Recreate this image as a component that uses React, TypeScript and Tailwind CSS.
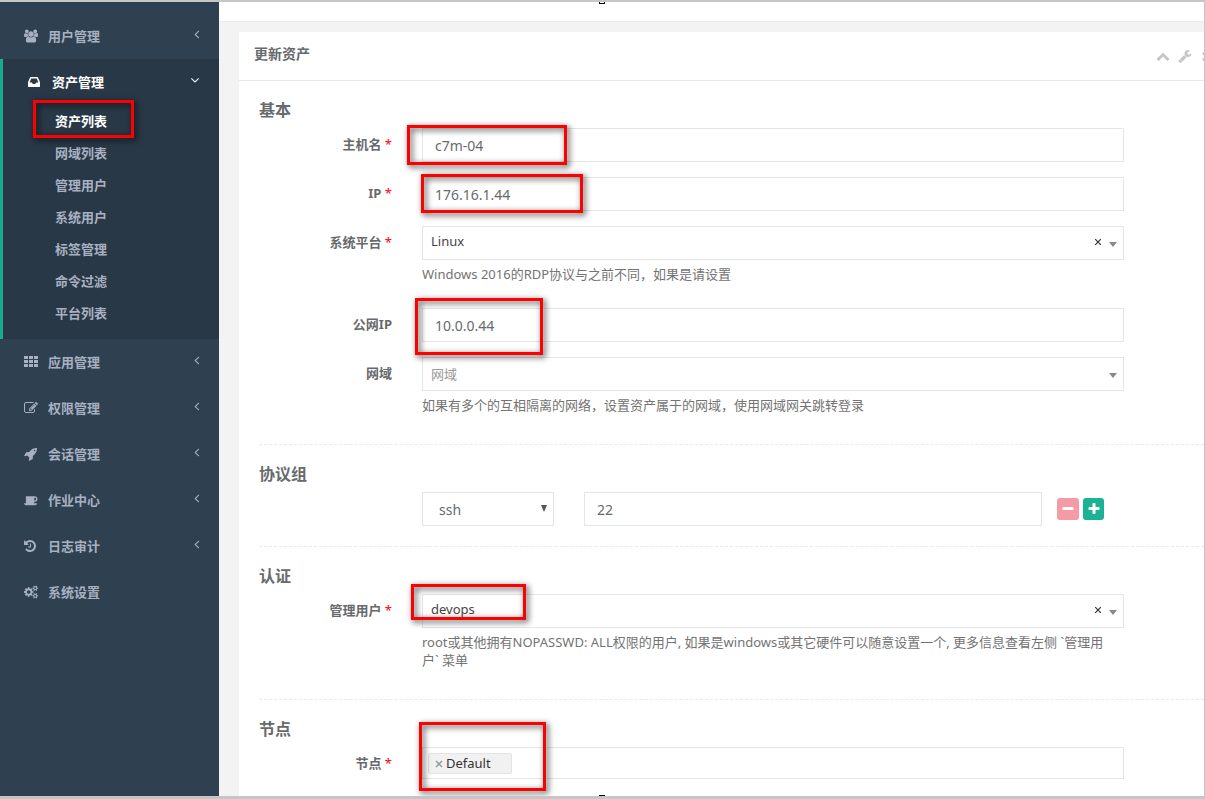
import { ReactNode, useState } from "react";

const icons = {
  users:
    "M593 896q-162 5-265 128h-134q-82 0-138-40.5t-56-118.5q0-353 124-353 6 0 43.5 21t97.5 42.5 119 21.5q67 0 133-23-5 37-5 66 0 159 93 293zm1071 637q0 120-73 189.5t-194 69.5h-874q-121 0-194-69.5t-73-189.5q0-53 3.5-103.5t14-109 26.5-108.5 43-97.5 62-81 85.5-53.5 111.5-20q10 0 43 21.5t73 48 107 48 135 21.5 135-21.5 107-48 73-48 43-21.5q61 0 111.5 20t85.5 53.5 62 81 43 97.5 26.5 108.5 14 109 3.5 103.5zm-1024-1277q0 106-75 181t-181 75-181-75-75-181 75-181 181-75 181 75 75 181zm704 384q0 159-112.5 271.5t-271.5 112.5-271.5-112.5-112.5-271.5 112.5-271.5 271.5-112.5 271.5 112.5 112.5 271.5zm576 225q0 78-56 118.5t-138 40.5h-134q-103-123-265-128 93-134 93-293 0-29-5-66 66 23 133 23 59 0 119-21.5t97.5-42.5 43.5-21q124 0 124 353zm-128-609q0 106-75 181t-181 75-181-75-75-181 75-181 181-75 181 75 75 181z",
  inbox:
    "M1151 960h316q-1-3-2.5-8.5t-2.5-7.5l-212-496h-708l-212 496q-1 3-2.5 8.5t-2.5 7.5h316l95 192h320zm513 30v482q0 26-19 45t-45 19h-1408q-26 0-45-19t-19-45v-482q0-62 25-123l238-552q10-25 36.5-42t52.5-17h832q26 0 52.5 17t36.5 42l238 552q25 61 25 123z",
  th: "M0 1152h512v384h-512zM640 1152h512v384h-512zM1280 1152h512v384h-512zM0 640h512v384h-512zM640 640h512v384h-512zM1280 640h512v384h-512zM0 128h512v384h-512zM640 128h512v384h-512zM1280 128h512v384h-512z",
  edit: "M888 1184l116-116-152-152-116 116v56h96v96h56zm440-720q-16-16-33 1l-350 350q-17 17-1 33t33-1l350-350q17-17 1-33zm80 594v190q0 119-84.5 203.5t-203.5 84.5h-832q-119 0-203.5-84.5t-84.5-203.5v-832q0-119 84.5-203.5t203.5-84.5h832q63 0 117 25 15 7 18 23 3 17-9 29l-49 49q-14 14-32 8-23-6-45-6h-832q-66 0-113 47t-47 113v832q0 66 47 113t113 47h832q66 0 113-47t47-113v-126q0-13 9-22l64-64q15-15 35-7t20 29zm-96-738l288 288-672 672h-288v-288zm444 132l-92 92-288-288 92-92q28-28 68-28t68 28l152 152q28 28 28 68t-28 68z",
  rocket:
    "M1440 448q0-40-28-68t-68-28-68 28-28 68 28 68 68 28 68-28 28-68zm224-288q0 249-75.5 430.5t-253.5 360.5q-81 80-195 176l-20 379q-2 16-16 26l-384 224q-7 4-16 4-12 0-23-9l-64-64q-13-14-8-32l85-276-281-281-276 85q-3 1-9 1-14 0-23-9l-64-64q-17-19-5-39l224-384q10-14 26-16l379-20q96-114 176-195 188-187 358-258t431-71q14 0 24 9.5t10 22.5z",
  coffee:
    "M1664 768q0-80-56-136t-136-56h-64v384h64q80 0 136-56t56-136zm-1664 576h1792q0 106-75 181t-181 75h-1280q-106 0-181-75t-75-181zm1856-576q0 159-112.5 271.5t-271.5 112.5h-64v32q0 92-66 158t-158 66h-704q-92 0-158-66t-66-158v-736q0-26 19-45t45-19h1152q159 0 271.5 112.5t112.5 271.5z",
  history:
    "M1536 896q0 156-61 298t-164 245-245 164-298 61q-172 0-327-72.5t-264-204.5q-7-10-6.5-22.5t8.5-20.5l137-138q10-9 25-9 16 2 23 12 73 95 179 147t225 52q104 0 198.5-40.5t163.5-109.5 109.5-163.5 40.5-198.5-40.5-198.5-109.5-163.5-163.5-109.5-198.5-40.5q-98 0-188 35.5t-160 101.5l137 138q31 30 14 69-17 40-59 40h-448q-26 0-45-19t-19-45v-448q0-42 40-59 39-17 69 14l130 129q107-101 244.5-156.5t284.5-55.5q156 0 298 61t245 164 164 245 61 298zm-640-288v448q0 14-9 23t-23 9h-320q-14 0-23-9t-9-23v-64q0-14 9-23t23-9h224v-352q0-14 9-23t23-9h64q14 0 23 9t9 23z",
  cogs: "M896 896q0-106-75-181t-181-75-181 75-75 181 75 181 181 75 181-75 75-181zm768 512q0-52-38-90t-90-38-90 38-38 90q0 53 37.5 90.5t90.5 37.5 90.5-37.5 37.5-90.5zm0-1024q0-52-38-90t-90-38-90 38-38 90q0 53 37.5 90.5t90.5 37.5 90.5-37.5 37.5-90.5zm-384 421v185q0 10-7 19.5t-16 10.5l-155 24q-11 35-32 76 34 48 90 115 7 11 7 20 0 12-7 19-23 30-82.5 89.5t-78.5 59.5q-11 0-21-7l-115-90q-37 19-77 31-11 108-23 155-7 24-30 24h-186q-11 0-20-7.5t-10-17.5l-23-153q-34-10-75-31l-118 89q-7 7-20 7-11 0-21-8-144-133-144-160 0-9 7-19 10-14 41-53t47-61q-23-44-35-82l-152-24q-10-1-17-9.5t-7-19.5v-185q0-10 7-19.5t16-10.5l155-24q11-35 32-76-34-48-90-115-7-11-7-20 0-12 7-20 22-30 82-89t79-59q11 0 21 7l115 90q34-18 77-32 11-108 23-154 7-24 30-24h186q11 0 20 7.5t10 17.5l23 153q34 10 75 31l118-89q8-7 20-7 11 0 21 8 144 133 144 160 0 8-7 19-12 16-42 54t-45 60q23 48 34 82l152 23q10 2 17 10.5t7 19.5zm640 533v140q0 16-149 31-12 27-30 52 51 113 51 138 0 4-4 7-122 71-124 71-8 0-46-47t-52-68q-20 2-30 2t-30-2q-14 21-52 68t-46 47q-2 0-124-71-4-3-4-7 0-25 51-138-18-25-30-52-149-15-149-31v-140q0-16 149-31 13-29 30-52-51-113-51-138 0-4 4-7 4-2 35-20t59-34 30-16q8 0 46 46.5t52 67.5q20-2 30-2t30 2q51-71 92-112l6-2q4 0 124 70 4 3 4 7 0 25-51 138 17 23 30 52 149 15 149 31zm0-1024v140q0 16-149 31-12 27-30 52 51 113 51 138 0 4-4 7-122 71-124 71-8 0-46-47t-52-68q-20 2-30 2t-30-2q-14 21-52 68t-46 47q-2 0-124-71-4-3-4-7 0-25 51-138-18-25-30-52-149-15-149-31v-140q0-16 149-31 13-29 30-52-51-113-51-138 0-4 4-7 4-2 35-20t59-34 30-16q8 0 46 46.5t52 67.5q20-2 30-2t30 2q51-71 92-112l6-2q4 0 124 70 4 3 4 7 0 25-51 138 17 23 30 52 149 15 149 31z",
  wrench:
    "M448 1472q0-26-19-45t-45-19-45 19-19 45 19 45 45 19 45-19 19-45zm644-420l-682 682q-37 37-90 37-52 0-91-37l-106-108q-38-36-38-90 0-53 38-91l681-681q39 98 114.5 173.5t173.5 114.5zm634-435q0 39-23 106-47 134-164.5 217.5t-258.5 83.5q-185 0-316.5-131.5t-131.5-316.5 131.5-316.5 316.5-131.5q58 0 121.5 16.5t107.5 46.5q16 11 16 28t-16 28l-293 169v224l193 107q5-3 79-48.5t135.5-81 70.5-35.5q15 0 23.5 10t8.5 25z",
  chevronUp:
    "M1683 1331l-166 165q-19 19-45 19t-45-19l-531-531-531 531q-19 19-45 19t-45-19l-166-165q-19-19-19-45.5t19-45.5l742-741q19-19 45-19t45 19l742 741q19 19 19 45.5t-19 45.5z",
  times:
    "M1490 1322q0 40-28 68l-136 136q-28 28-68 28t-68-28l-294-294-294 294q-28 28-68 28t-68-28l-136-136q-28-28-28-68t28-68l294-294-294-294q-28-28-28-68t28-68l136-136q28-28 68-28t68 28l294 294 294-294q28-28 68-28t68 28l136 136q28 28 28 68t-28 68l-294 294 294 294q28 28 28 68z",
  angleLeft:
    "M1171 544q0 13-10 23l-393 393 393 393q10 10 10 23t-10 23l-50 50q-10 10-23 10t-23-10l-466-466q-10-10-10-23t10-23l466-466q10-10 23-10t23 10l50 50q10 10 10 23z",
  angleDown:
    "M1395 736q0 13-10 23l-466 466q-10 10-23 10t-23-10l-466-466q-10-10-10-23t10-23l50-50q10-10 23-10t23 10l393 393 393-393q10-10 23-10t23 10l50 50q10 10 10 23z",
  minus:
    "M1600 736v192q0 40-28 68t-68 28h-1216q-40 0-68-28t-28-68v-192q0-40 28-68t68-28h1216q40 0 68 28t28 68z",
  plus: "M1600 736v192q0 40-28 68t-68 28h-416v416q0 40-28 68t-68 28h-192q-40 0-68-28t-28-68v-416h-416q-40 0-68-28t-28-68v-192q0-40 28-68t68-28h416v-416q0-40 28-68t68-28h192q40 0 68 28t28 68v416h416q40 0 68 28t28 68z",
};

type IconName = keyof typeof icons;

const Icon = (props: { name: IconName; className?: string; wide?: boolean }) => (
  <svg
    viewBox={props.wide ? "0 0 1920 1792" : "0 0 1792 1792"}
    className={props.className ?? "size-[14px] shrink-0"}
    fill="currentColor"
    aria-hidden="true"
  >
    <path d={icons[props.name]} />
  </svg>
);

// red rectangle laid over the values to fill in
const Mark = (props: { className: string }) => (
  <span
    className={
      "absolute z-10 pointer-events-none border-3 border-[#ff0000] drop-shadow-[2px_2px_3px_rgba(0,0,0,0.8)] " +
      props.className
    }
  />
);

const assetMenu = [
  "资产列表",
  "网域列表",
  "管理用户",
  "系统用户",
  "标签管理",
  "命令过滤",
  "平台列表",
];

const lowerMenu: { title: string; icon: IconName; wide?: boolean }[] = [
  { title: "应用管理", icon: "th" },
  { title: "权限管理", icon: "edit" },
  { title: "会话管理", icon: "rocket" },
  { title: "作业中心", icon: "coffee", wide: true },
  { title: "日志审计", icon: "history" },
  { title: "系统设置", icon: "cogs", wide: true },
];

const MenuItem = (props: {
  title: string;
  icon: IconName;
  wide?: boolean;
  arrow?: IconName;
  active?: boolean;
}) => (
  <a
    href="#"
    className={
      props.active
        ? "flex h-[46px] items-center gap-[11px] pl-6 pr-[17px] text-white"
        : "flex h-[46px] items-center gap-[10px] pl-6 pr-[15px]"
    }
  >
    <Icon name={props.icon} wide={props.wide} />
    <span className="flex-1 pt-[2px]">{props.title}</span>
    {props.arrow && (
      <Icon name={props.arrow} className="mb-[5px] size-[14px] shrink-0" />
    )}
  </a>
);

const Sidebar = () => (
  <nav className="w-[219px] shrink-0 bg-[#2f4050] pt-[11px] text-[13px] font-semibold text-[#a7b1c2]">
    <MenuItem title="用户管理" icon="users" wide arrow="angleLeft" />
    <div className="border-l-3 border-[#19aa8d] bg-[#293846] pb-[10px]">
      <MenuItem title="资产管理" icon="inbox" arrow="angleDown" active />
      <ul>
        {assetMenu.map((title, i) => (
          <li key={title} className="relative">
            <a
              href="#"
              className={
                i === 0
                  ? "flex h-8 items-center pt-[2px] pl-[52px] text-white"
                  : "flex h-8 items-center pt-[2px] pl-[52px]"
              }
            >
              {title}
            </a>
            {i === 0 && (
              <Mark className="-top-[5px] left-[30px] h-[38px] w-[101px]" />
            )}
          </li>
        ))}
      </ul>
    </div>
    {lowerMenu.map((item) => (
      <MenuItem
        key={item.title}
        {...item}
        arrow={item.icon === "cogs" ? undefined : "angleLeft"}
      />
    ))}
  </nav>
);

const Section = (props: { title: string; children: ReactNode }) => (
  <section className="border-b border-dashed border-[#e7eaec] pt-[19px] pb-5 last:border-b-0 last:pb-4">
    <h3 className="mb-2 text-base leading-5 font-semibold">{props.title}</h3>
    <div className="flex flex-col gap-[15px]">{props.children}</div>
  </section>
);

const Field = (props: {
  label?: string;
  id?: string;
  required?: boolean;
  help?: string;
  children: ReactNode;
}) => (
  <div className="flex gap-[30px] pr-20">
    <div className="w-[133px] shrink-0 pt-[7px] text-right text-[13px] leading-[18px] font-bold">
      {props.label && (
        <label htmlFor={props.id}>
          {props.label}
          {props.required && (
            <span className="font-normal text-[#ff0000]"> *</span>
          )}
        </label>
      )}
    </div>
    <div className="relative min-w-0 flex-1">
      {props.children}
      {props.help && (
        <p className="mt-[5px] pr-3 pb-[10px] text-[13px] leading-[18px] text-[#737373]">
          {props.help}
        </p>
      )}
    </div>
  </div>
);

const TextBox = (props: { id: string; value: string; label?: string }) => {
  const [value, setValue] = useState(props.value);
  return (
    <input
      id={props.id}
      type="text"
      aria-label={props.label}
      value={value}
      onChange={(e) => setValue(e.target.value)}
      className="block h-[34px] w-full border border-[#e5e6e7] bg-white px-3 text-sm"
    />
  );
};

const SelectBox = (props: { id: string; value: string; empty?: boolean }) => (
  <div className="relative">
    <select
      id={props.id}
      className={
        props.empty
          ? "block h-[34px] w-full appearance-none border border-[#e5e6e7] bg-white pt-[2px] pl-2 text-[13px] text-[#999999]"
          : "block h-[34px] w-full appearance-none border border-[#e5e6e7] bg-white pb-[2px] pl-2 text-[13px] text-[#444444]"
      }
    >
      <option>{props.value}</option>
    </select>
    {!props.empty && (
      <button
        type="button"
        aria-label="清除"
        className="absolute top-2 right-[21px] flex h-4 w-[10px] items-center justify-center text-[#333333]"
      >
        <svg viewBox="0 0 8 8" className="size-2" aria-hidden="true">
          <path
            d="M1.2 1.2l5.6 5.6M6.8 1.2L1.2 6.8"
            stroke="currentColor"
            strokeWidth="1.2"
          />
        </svg>
      </button>
    )}
    <svg
      viewBox="0 0 8 5"
      className="pointer-events-none absolute top-4 right-[7px] h-[5px] w-2"
      aria-hidden="true"
    >
      <path d="M0 0h8L4 5z" fill="#888888" />
    </svg>
  </div>
);

const AssetForm = () => (
  <form className="pl-5">
    <Section title="基本">
      <Field label="主机名" id="hostname" required>
        <TextBox id="hostname" value="c7m-04" />
        <Mark className="-top-[3px] -left-[15px] h-10 w-40" />
      </Field>
      <Field label="IP" id="ip" required>
        <TextBox id="ip" value="176.16.1.44" />
        <Mark className="-top-[3px] -left-px h-[39px] w-[162px]" />
      </Field>
      <Field
        label="系统平台"
        id="platform"
        required
        help="Windows 2016的RDP协议与之前不同，如果是请设置"
      >
        <SelectBox id="platform" value="Linux" />
      </Field>
      <Field label="公网IP" id="public_ip">
        <TextBox id="public_ip" value="10.0.0.44" />
        <Mark className="-top-[10px] -left-[7px] h-[57px] w-32" />
      </Field>
      <Field
        label="网域"
        id="domain"
        help="如果有多个的互相隔离的网络，设置资产属于的网域，使用网域网关跳转登录"
      >
        <SelectBox id="domain" value="网域" empty />
      </Field>
    </Section>

    <Section title="协议组">
      <Field>
        <div className="flex items-center pr-5">
          <div className="relative w-[132px] shrink-0">
            <select
              aria-label="协议"
              className="block h-[34px] w-full appearance-none border border-[#e5e6e7] bg-white px-4 pt-[2px] text-sm"
            >
              <option>ssh</option>
            </select>
            <svg
              viewBox="0 0 6 7"
              className="pointer-events-none absolute top-[13px] right-[7px] h-[7px] w-[6px]"
              aria-hidden="true"
            >
              <path d="M0 0h6L3 7z" fill="#555555" />
            </svg>
          </div>
          <div className="mr-[15px] ml-[30px] flex-1">
            <TextBox id="port" value="22" label="端口" />
          </div>
          <button
            type="button"
            aria-label="删除"
            className="mr-1 flex h-[22px] w-[22px] items-center justify-center rounded-[3px] bg-[#f59ba5] text-white"
          >
            <Icon name="minus" />
          </button>
          <button
            type="button"
            aria-label="添加"
            className="flex h-[22px] w-[21px] items-center justify-center rounded-[3px] bg-[#1ab394] text-white"
          >
            <Icon name="plus" />
          </button>
        </div>
      </Field>
    </Section>

    <Section title="认证">
      <Field
        label="管理用户"
        id="admin_user"
        required
        help="root或其他拥有NOPASSWD: ALL权限的用户, 如果是windows或其它硬件可以随意设置一个, 更多信息查看左侧 `管理用户` 菜单"
      >
        <SelectBox id="admin_user" value="devops" />
        <Mark className="-top-[10px] -left-[11px] h-9 w-[115px]" />
      </Field>
    </Section>

    <Section title="节点">
      <Field label="节点" id="nodes" required>
        <div className="flex h-8 items-center border border-[#e5e6e7] bg-white pl-[5px]">
          <span className="flex h-[21px] w-[84px] items-center rounded-xs border border-[#e4e4e4] bg-[#f1f1f1] pt-[2px] pl-[6px] text-[13px] text-[#333333]">
            <button
              type="button"
              aria-label="移除 Default"
              className="mr-[3px] text-[#999999]"
            >
              <svg viewBox="0 0 8 8" className="size-2" aria-hidden="true">
                <path
                  d="M1 1l6 6M7 1L1 7"
                  stroke="currentColor"
                  strokeWidth="1.5"
                />
              </svg>
            </button>
            Default
          </span>
          <input id="nodes" type="text" className="min-w-0 flex-1" />
        </div>
        <Mark className="-top-[25px] -left-[3px] h-[69px] w-[127px]" />
      </Field>
    </Section>
  </form>
);

export default function App() {
  return (
    <div className="relative flex min-h-screen overflow-hidden border-t-2 border-r border-b-3 border-[#c6c6c6] bg-[#f3f3f4] font-['Noto_Sans','Noto_Sans_CJK_SC',sans-serif] text-[#676a6c]">
      <Sidebar />
      <div className="flex min-w-0 flex-1 flex-col">
        <header className="h-5 border-b border-[#e7eaec] bg-white" />
        <main className="flex flex-1 flex-col pt-[10px] pl-5">
          <div className="flex-1 bg-white">
            <div className="flex h-[49px] items-center justify-between overflow-hidden border-b border-[#e7eaec] pl-[15px]">
              <h5 className="pb-1 text-sm font-semibold">更新资产</h5>
              <div className="-mr-[10px] flex gap-2 text-[#c4c4c4]">
                <button type="button" aria-label="折叠">
                  <Icon name="chevronUp" />
                </button>
                <button type="button" aria-label="设置">
                  <Icon name="wrench" />
                </button>
                <button type="button" aria-label="关闭">
                  <Icon name="times" />
                </button>
              </div>
            </div>
            <AssetForm />
          </div>
        </main>
      </div>

      {/* selection handles on the frame */}
      <span className="absolute -top-[2px] left-1/2 z-20 h-1 w-[6px] -translate-x-1/2 border border-t-0 border-black bg-white" />
      <span className="absolute -bottom-[3px] left-1/2 z-20 h-1 w-[6px] -translate-x-1/2 border border-b-0 border-black bg-white" />
      <span className="absolute top-1/2 -right-px z-20 h-[6px] w-px -translate-y-1/2 bg-black" />
    </div>
  );
}
